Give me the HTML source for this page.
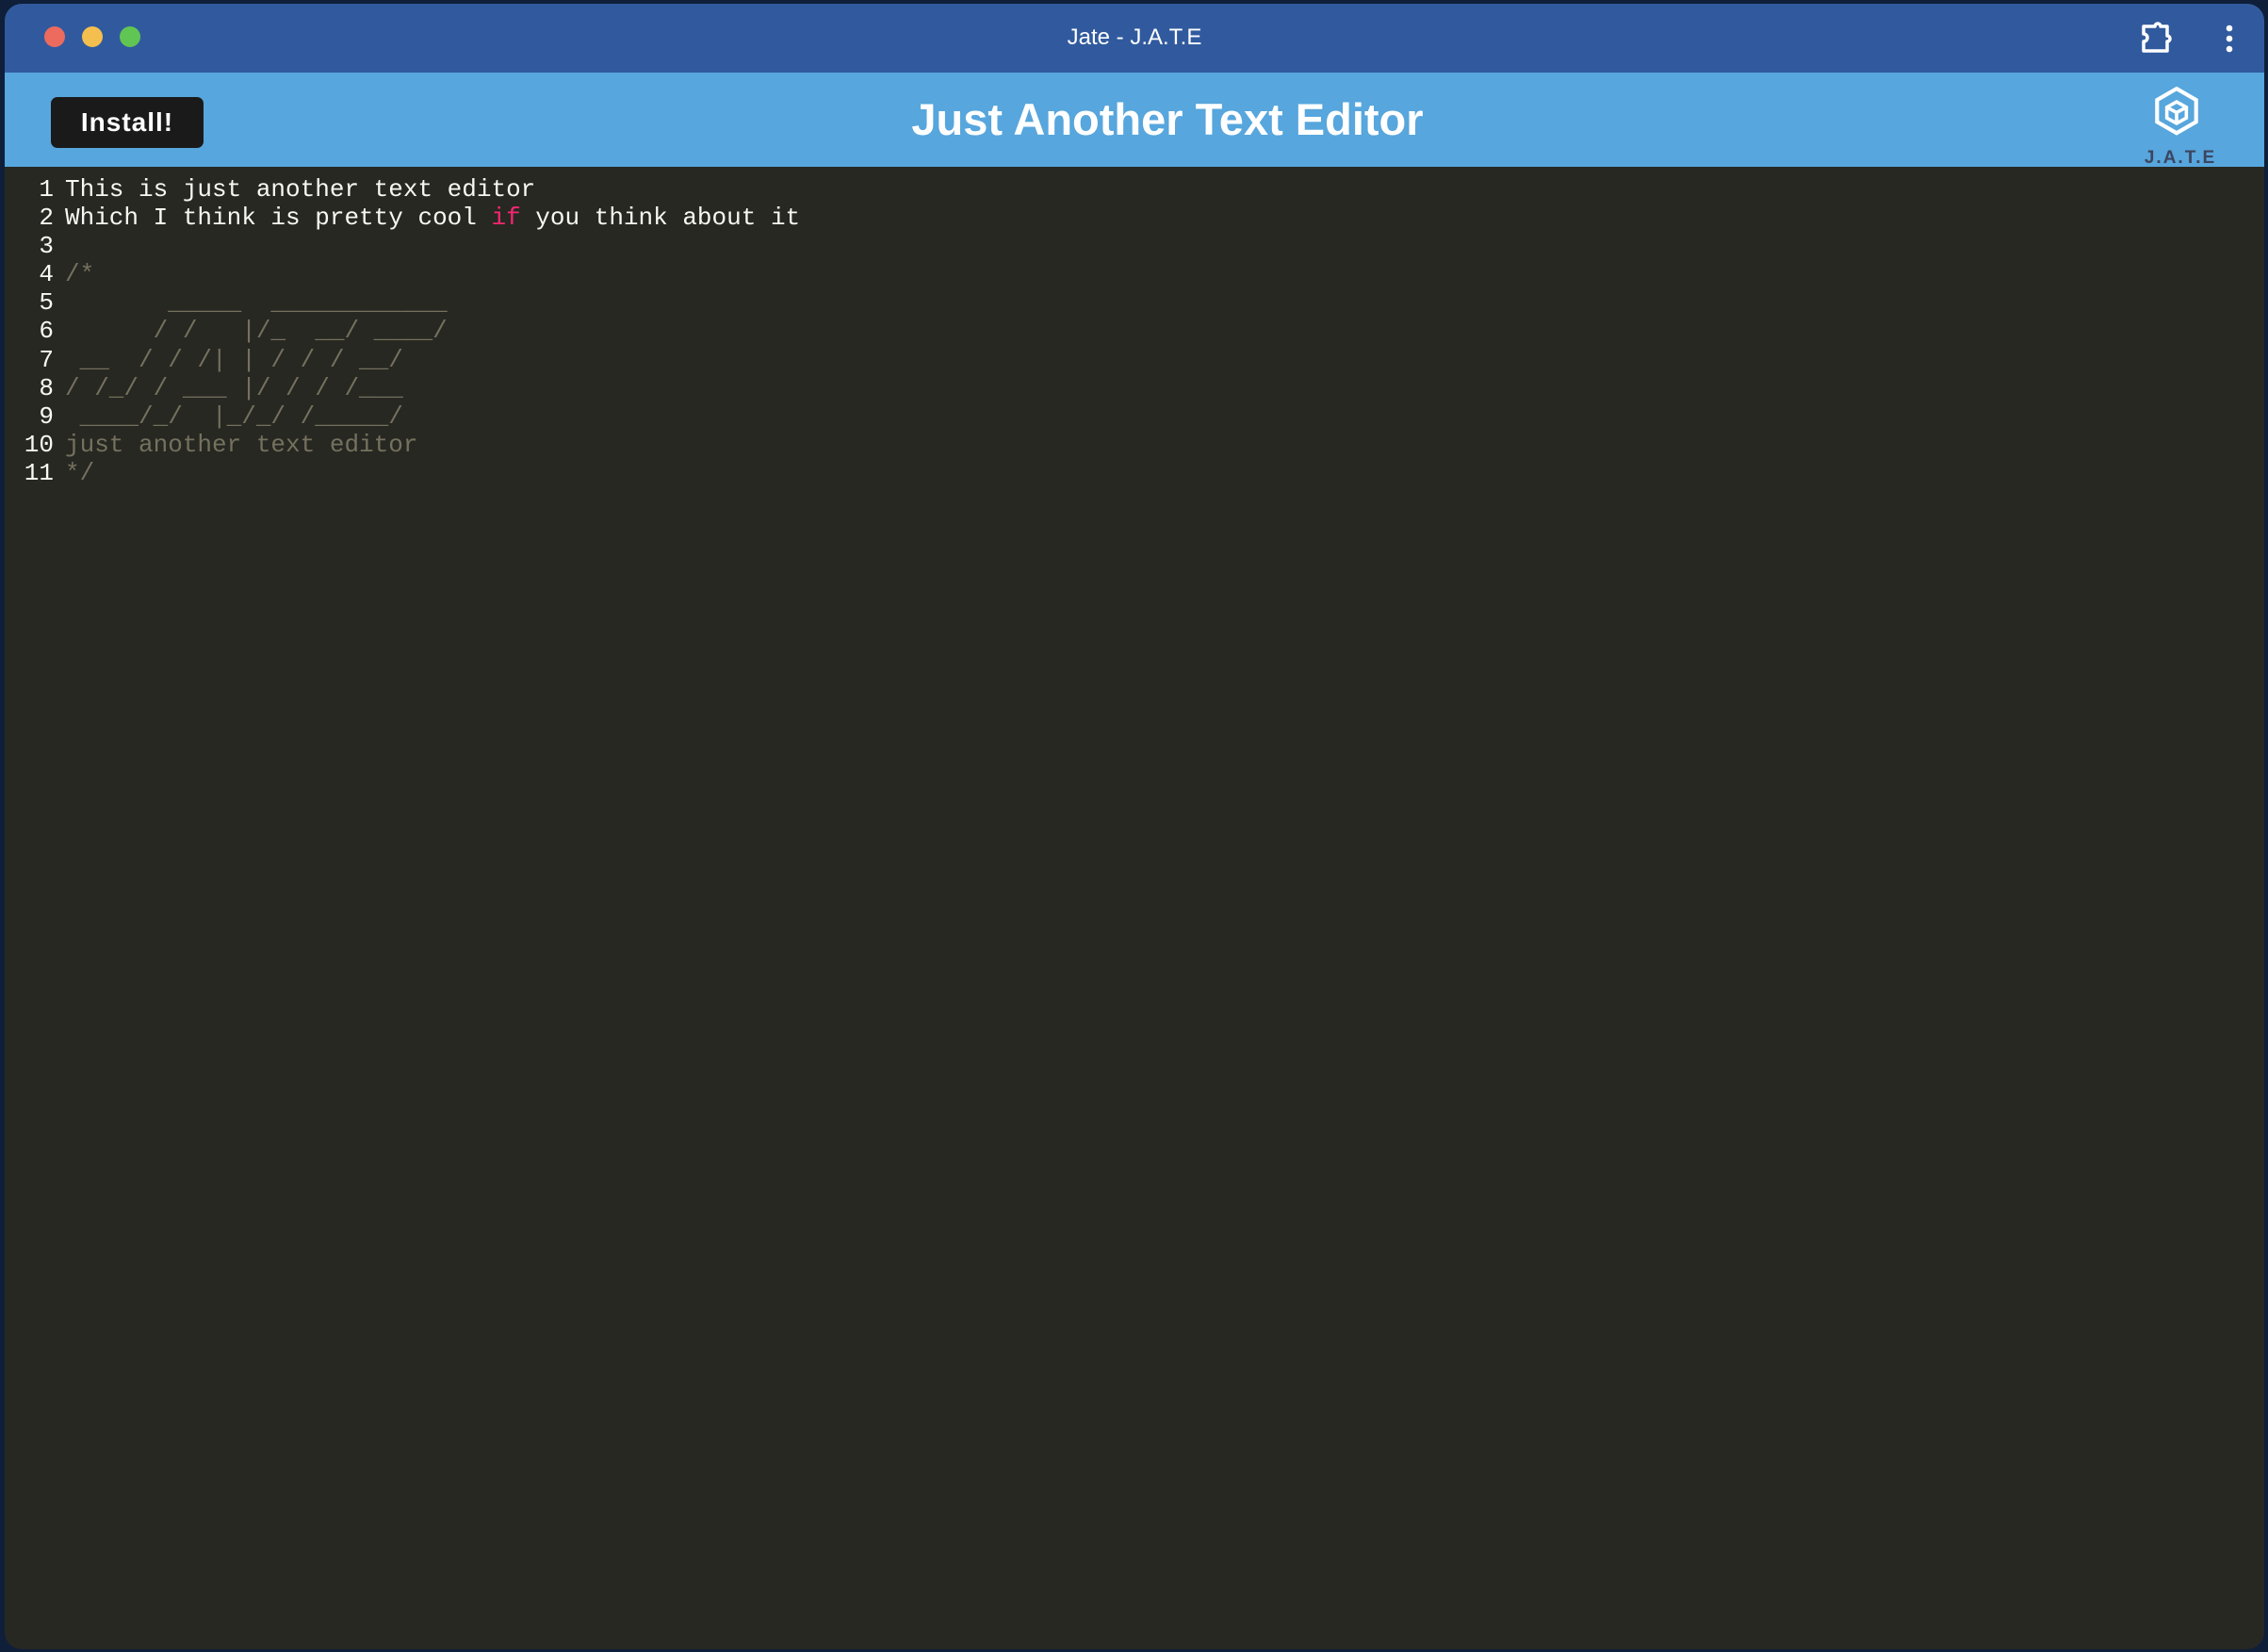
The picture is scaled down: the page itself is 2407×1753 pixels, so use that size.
<!DOCTYPE html>
<html><head><meta charset="utf-8"><style>
html,body{margin:0;padding:0;width:2407px;height:1753px;overflow:hidden;background:#0f1f3a;}
.win{position:absolute;left:5px;top:4px;width:2398px;height:1746px;border-radius:18px;overflow:hidden;background:#272822;}
.tb{position:absolute;left:0;top:0;right:0;height:73px;background:#315a9e;}
.dot{position:absolute;top:24px;width:22px;height:22px;border-radius:50%;}
.ttl{position:absolute;left:0;right:0;top:22px;text-align:center;color:#fff;font:24px "Liberation Sans",sans-serif;padding-left:0px;}
.hd{position:absolute;left:0;right:0;top:73px;height:100px;background:#57a6dd;}
.btn{position:absolute;left:49px;top:26px;width:162px;height:54px;background:#1a1a1a;border-radius:7px;color:#fff;font:bold 28px "Liberation Sans",sans-serif;text-align:center;line-height:54px;letter-spacing:1px;}
.h1{position:absolute;left:0;right:0;top:22px;text-align:center;color:#fff;font:bold 47px "Liberation Sans",sans-serif;padding-left:70px;}
.ed{position:absolute;left:0;top:182px;font:26px/30.1px "Liberation Mono",monospace;color:#f8f8f2;white-space:pre;}
.ln{display:inline-block;width:52px;text-align:right;margin-right:12px;color:#f8f8f2;}
.c{color:#75715e}.k{color:#f92672}
</style></head><body>
<div class="win">
<div class="tb">
<div class="dot" style="left:42px;background:#ec6a5e"></div>
<div class="dot" style="left:82px;background:#f4bf4f"></div>
<div class="dot" style="left:122px;background:#61c554"></div>
<div class="ttl">Jate - J.A.T.E</div>
<svg style="position:absolute;left:2264px;top:16px" width="40" height="40" viewBox="0 0 40 40"><path d="M6 8h12a3 3 0 0 1 6 0h7v10a3 3 0 0 1 0 6v10H6V24a4 4 0 0 0 0-8z" fill="none" stroke="#fff" stroke-width="3.5" stroke-linejoin="round"/></svg>
<svg style="position:absolute;left:2356px;top:22px" width="10" height="30"><circle cx="5" cy="4" r="3.3" fill="#fff"/><circle cx="5" cy="15" r="3.3" fill="#fff"/><circle cx="5" cy="26" r="3.3" fill="#fff"/></svg>
</div>
<div class="hd">
<div class="btn">Install!</div>
<div class="h1">Just Another Text Editor</div>
<svg style="position:absolute;left:2278px;top:14px" width="54" height="58" viewBox="0 0 50 56"><path d="M25 3L45 14.5V37L25 48.5 5 37V14.5z" fill="none" stroke="#fff" stroke-width="4"/><path d="M15 22L25 16.5 35 22V33L25 38.5 15 33z M15 22L25 27.5 35 22 M25 27.5V38.5" fill="none" stroke="#fff" stroke-width="3.5"/></svg>
<div style="position:absolute;left:2264px;top:80px;width:90px;text-align:center;color:#3c4560;font:bold 19px 'Liberation Sans',sans-serif;letter-spacing:2px">J.A.T.E</div>
</div>
<div class="ed"><span class="ln">1</span>This is just another text editor
<span class="ln">2</span>Which I think is pretty cool <span class="k">if</span> you think about it
<span class="ln">3</span>
<span class="ln">4</span><span class="c">/*</span>
<span class="ln">5</span><span class="c">       _____  ____________</span>
<span class="ln">6</span><span class="c">      / /   |/_  __/ ____/</span>
<span class="ln">7</span><span class="c"> __  / / /| | / / / __/</span>
<span class="ln">8</span><span class="c">/ /_/ / ___ |/ / / /___</span>
<span class="ln">9</span><span class="c"> ____/_/  |_/_/ /_____/</span>
<span class="ln">10</span><span class="c">just another text editor</span>
<span class="ln">11</span><span class="c">*/</span></div>
</div>
</body></html>
